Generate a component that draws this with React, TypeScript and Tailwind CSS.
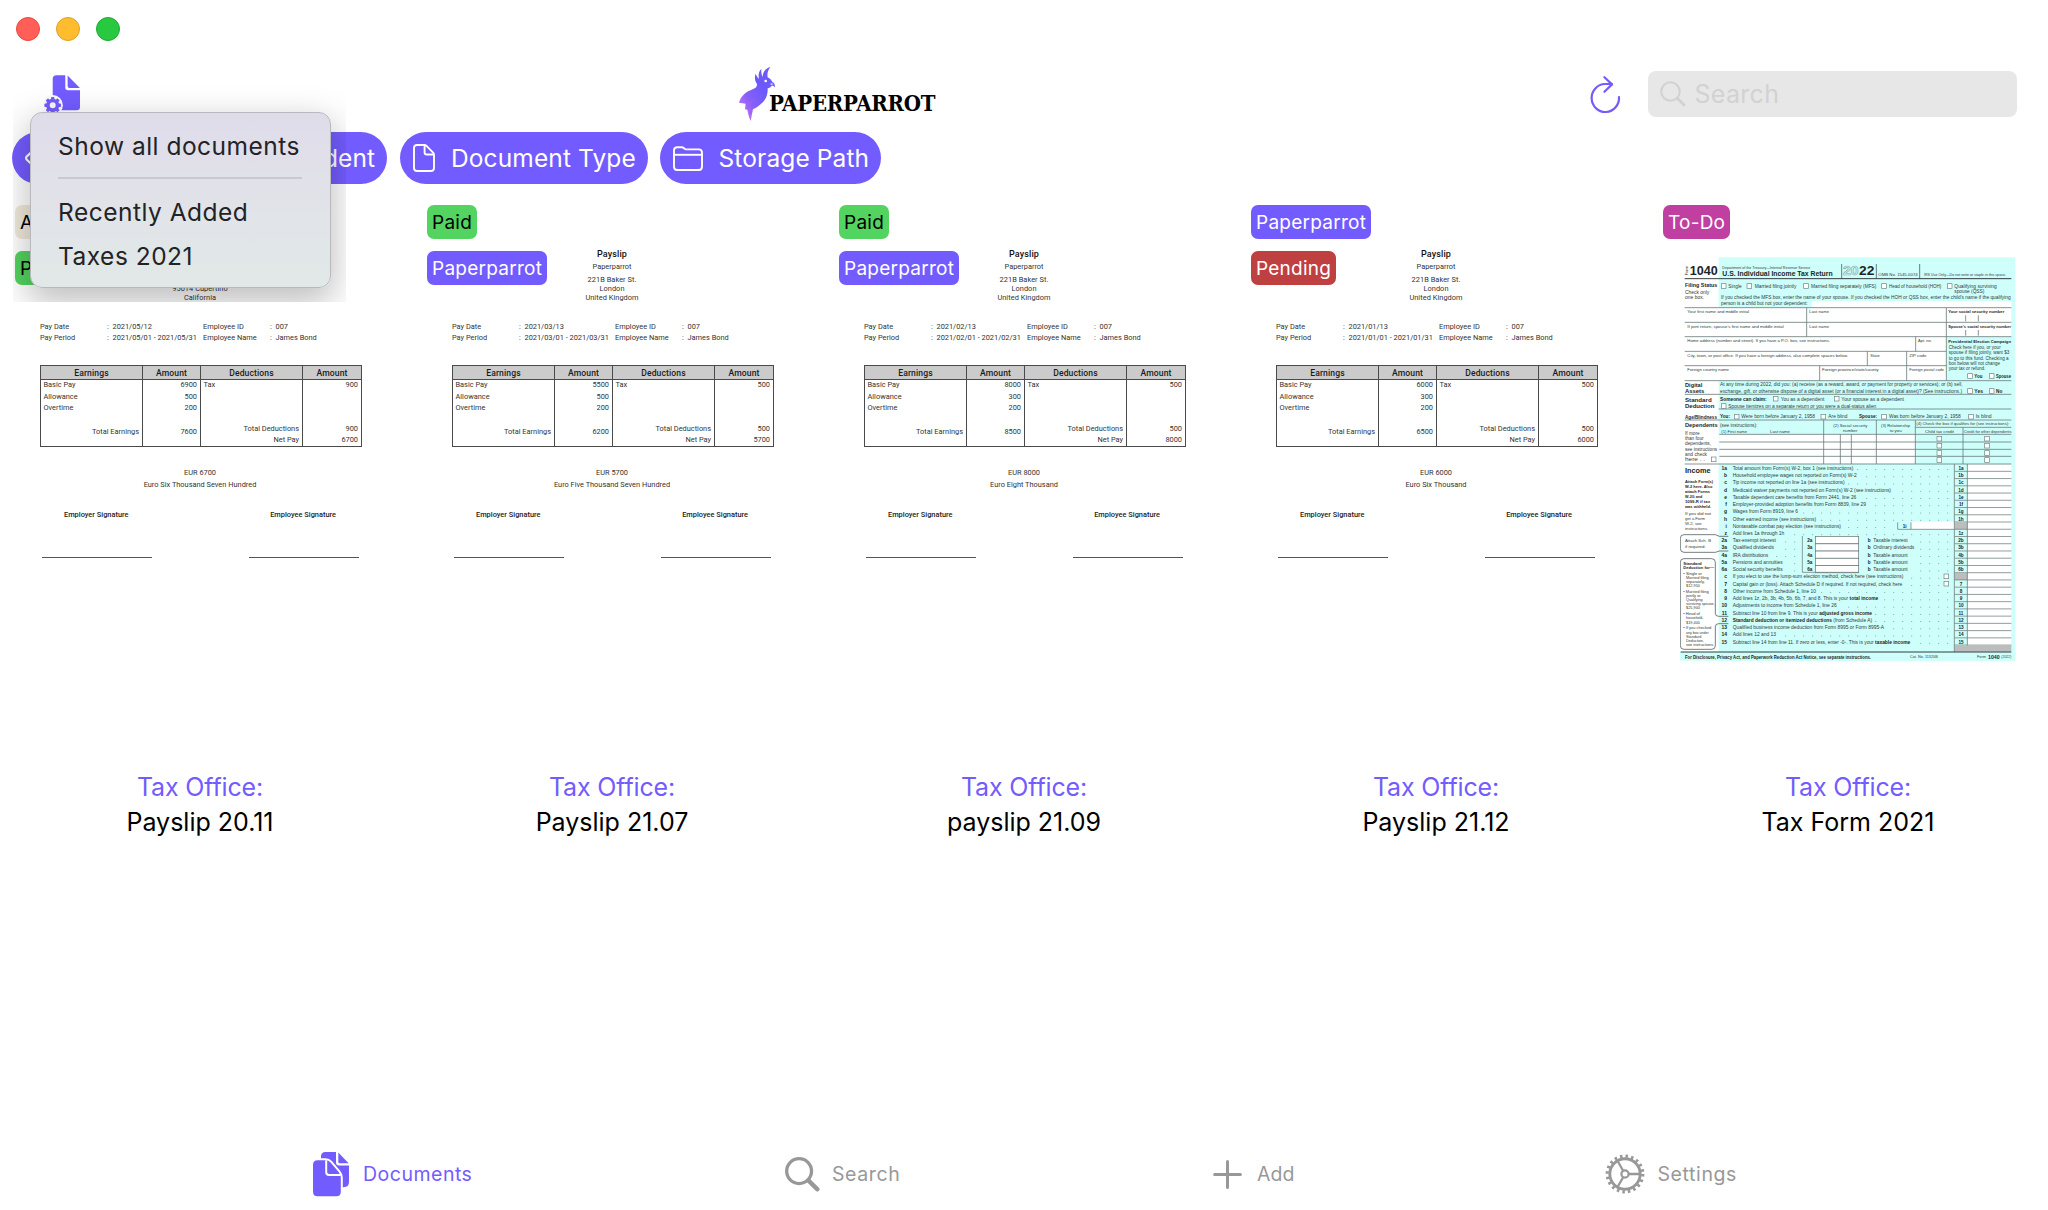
import React from "react";

const PURPLE = "#735cff";

/* ---------- icons ---------- */

function SavedViewsIcon() {
  const teeth = [0, 45, 90, 135, 180, 225, 270, 315];
  return (
    <svg width="38" height="42" viewBox="44 74 38 42" fill={PURPLE}>
      <path d="M56.5 75.3H65.3V87.5Q65.3 90.3 68 90.3H80V107Q80 110.3 76.7 110.3H56Q52.7 110.3 52.7 107V79Q52.7 75.3 56.5 75.3Z" />
      <path d="M67.6 75.6L79.9 88H69.5Q67.6 88 67.6 86Z" />
      <circle cx="52.7" cy="105.3" r="10.2" fill="#fafafa" />
      <circle cx="52.7" cy="105.3" r="4.8" fill="none" stroke={PURPLE} strokeWidth="3.6" />
      {teeth.map((a) => (
        <rect key={a} x="51" y="97" width="3.4" height="3.4" rx="0.8" transform={`rotate(${a} 52.7 105.3)`} />
      ))}
    </svg>
  );
}

function ParrotMark() {
  return (
    <svg width="60" height="66" viewBox="0 0 180 198" className="shrink-0">
      <defs>
        <linearGradient id="parrot" x1="0.1" y1="0.8" x2="0.6" y2="0.35">
          <stop offset="0" stopColor="#c06cf7" />
          <stop offset="0.4" stopColor="#8560f9" />
          <stop offset="1" stopColor="#6d59fb" />
        </linearGradient>
      </defs>
      <path
        fill="url(#parrot)"
        d="M81 72C74 62 73 52 77 41C80 48 83 53 87 56C84 44 87 33 94 26C93 37 95 45 98 51C98 37 106 25 121 21C113 31 111 42 113 52C120 55 125 61 127 66C133 68 136 75 134 82C130 77 127 77 124 78C122 82 118 84 113 85C114 102 108 120 95 130C86 139 77 144 69 148C66 160 64 172 62 183C57 172 54 160 52 149L45 148L47 131L27 128C31 111 44 98 58 92C70 87 82 84 81 72Z"
      />
      <path d="M47 131C58 128 66 122 72 112C70 126 62 140 52 149" fill="#9a63f6" opacity="0.6" />
      <circle cx="107" cy="63" r="4" fill="#fff" />
      <path d="M122 70Q127 69 131 73Q126 74 122 75Z" fill="#fff" opacity="0.8" />
    </svg>
  );
}

function RefreshIcon() {
  return (
    <svg width="32" height="40" viewBox="1589 75 32 40" fill="none" stroke={PURPLE} strokeWidth="2.2" strokeLinecap="round" strokeLinejoin="round">
      <path d="M1619 97A13.7 14 0 1 1 1605 84H1612" />
      <path d="M1604.4 77.2L1612 84.4L1604.4 91.8" />
    </svg>
  );
}

function MagnifierIcon({ className, thick }: { className: string; thick: number }) {
  return (
    <svg className={className} viewBox="0 0 36 36" fill="none" stroke="currentColor" strokeLinecap="round">
      <circle cx="14.5" cy="14.5" r="12.8" strokeWidth={thick} />
      <path d="M24 24L33.2 33.2" strokeWidth={thick * 1.35} />
    </svg>
  );
}

function TagIcon() {
  return (
    <svg width="30" height="28" viewBox="0 0 30 28" fill="none" stroke="#fff" strokeWidth="2.2" strokeLinejoin="round">
      <path d="M1.6 15.5Q.6 14 1.6 12.6L12 3H24Q27 3 27 6V16L16 26Q14 27 12.6 26Z" />
      <circle cx="21" cy="9" r="1.5" />
    </svg>
  );
}

function PersonIcon() {
  return (
    <svg width="28" height="28" viewBox="0 0 28 28" fill="none" stroke="#fff" strokeWidth="2">
      <circle cx="14" cy="9" r="6" />
      <path d="M3 26Q3 17 14 17T25 26Z" />
    </svg>
  );
}

function FileIcon() {
  return (
    <svg width="22" height="28" viewBox="0 0 22 28" fill="none" stroke="#fff" strokeWidth="1.9" strokeLinejoin="round">
      <path d="M4 1H11.4Q12.6 1 13.5 1.9L20.1 8.7Q21 9.6 21 10.8V24Q21 27 18 27H4Q1 27 1 24V4Q1 1 4 1Z" />
      <path d="M11.6 1.3V8.4Q11.6 10.5 13.7 10.5H20.6" />
    </svg>
  );
}

function FolderIcon() {
  return (
    <svg width="30" height="25" viewBox="0 0 30 25" fill="none" stroke="#fff" strokeWidth="1.9" strokeLinejoin="round">
      <path d="M4.3 1.2H8.6Q9.8 1.2 10.8 2L11.6 2.7Q12.5 3.4 13.7 3.4H25.7Q29 3.4 29 6.7V20.7Q29 24 25.7 24H4.3Q1 24 1 20.7V4.5Q1 1.2 4.3 1.2Z" />
      <path d="M1.2 8.8H28.8" />
    </svg>
  );
}

function DocumentsIcon() {
  return (
    <svg width="37" height="45" viewBox="0 0 37 45" fill={PURPLE}>
      <path d="M12.5 0H23V10.2Q23 13.4 26 13.4H36V30Q36 35.2 30.5 35.2H20V12H8V4.5Q8 0 12.5 0Z" />
      <path d="M25.3 .6L35.6 11.2H26.6Q25.3 11.2 25.3 10Z" />
      <path
        d="M4.5 8.3H12.6Q15.6 8.3 17.6 10.6L25.6 20Q27.8 22.6 27.8 25.6V39.7Q27.8 44.2 23.3 44.2H4.5Q0 44.2 0 39.7V12.8Q0 8.3 4.5 8.3Z"
        stroke="#fff"
        strokeWidth="4"
        paintOrder="stroke"
      />
      <path d="M13.2 8.3V20Q13.2 22.9 16 22.9H27.8" fill="none" stroke="#fff" strokeWidth="2" />
    </svg>
  );
}

function PlusIcon() {
  return (
    <svg width="29" height="29" viewBox="0 0 29 29" stroke="#989898" strokeWidth="3" strokeLinecap="round">
      <path d="M14.5 1.6V27.4M1.6 14.5H27.4" />
    </svg>
  );
}

function GearIcon() {
  return (
    <svg width="40" height="40" viewBox="-20 -20 40 40" fill="none" stroke="#989898">
      <circle r="15.2" strokeWidth="2.9" />
      <circle r="17.8" strokeWidth="3.2" strokeDasharray="2.5 3.09" />
      <circle r="3.6" strokeWidth="2.2" />
      <path d="M4 0H15M-2 -3.5L-7.4 -13M-2 3.5L-7.4 13" strokeWidth="2.3" />
    </svg>
  );
}

/* ---------- payslip preview ---------- */

type Slip = {
  address: string[];
  date: string;
  period: string;
  basic: string;
  allowance: string;
  total: string;
  tax: string;
  net: string;
  words: string;
};

function Column({ title, width, align, rows, total, net }: { title: string; width: string; align: string; rows: string[]; total: string; net?: string }) {
  return (
    <div className={`${width} flex flex-col border-r border-[#4a4a4a]`}>
      <div className="h-[14px] border-b border-[#4a4a4a] bg-[#cbcbcb] text-center text-[8.6px] leading-[14px] font-medium tracking-[0.1px] text-[#1c1c1c]">{title}</div>
      <div className={`-mt-px flex h-[48px] flex-col pr-[3px] pl-[2.5px] leading-[11.7px] ${align}`}>
        {rows.map((r) => (
          <span key={r}>{r}</span>
        ))}
      </div>
      <div className="px-[3px] text-right leading-[10.8px]">
        <div>{total}</div>
        <div>{net}</div>
      </div>
    </div>
  );
}

function Info({ label, value }: { label: string; value: string }) {
  return (
    <div className="flex h-[11.4px] whitespace-nowrap">
      <span className="w-[67px]">{label}</span>
      <span className="w-[5.5px]">:</span>
      <span>{value}</span>
    </div>
  );
}

function Payslip({ slip }: { slip: Slip }) {
  return (
    <div className="mx-auto w-[322px] pt-[63px] font-[Roboto,sans-serif] text-[7.4px] leading-[11.4px] text-[#333]">
      <div className="flex h-[73px] flex-col items-center whitespace-nowrap">
        <div className="h-[14px] pt-px text-[9px] leading-[10px] font-medium tracking-[0.1px] text-[#111]">Payslip</div>
        <div className="h-[13px] leading-[9px]">Paperparrot</div>
        {slip.address.map((l) => (
          <div key={l} className="leading-[9px] tracking-[0.05px]">{l}</div>
        ))}
      </div>
      <div className="flex h-[44px] pl-px">
        <div className="w-[163px]">
          <Info label="Pay Date" value={slip.date} />
          <Info label="Pay Period" value={slip.period} />
        </div>
        <div>
          <Info label="Employee ID" value="007" />
          <Info label="Employee Name" value="James Bond" />
        </div>
      </div>
      <div className="ml-px flex h-[82px] w-[322px] border-y border-l border-[#4a4a4a]">
        <Column title="Earnings" width="w-[102px]" align="" rows={["Basic Pay", "Allowance", "Overtime"]} total="Total Earnings" />
        <Column title="Amount" width="w-[58px]" align="text-right" rows={[slip.basic, slip.allowance, "200"]} total={slip.total} />
        <Column title="Deductions" width="w-[102px]" align="" rows={["Tax"]} total="Total Deductions" net="Net Pay" />
        <Column title="Amount" width="w-[59px]" align="text-right" rows={[slip.tax]} total={slip.tax} net={slip.net} />
      </div>
      <div className="pt-[20px] text-center leading-[11.7px]">
        <div>EUR {slip.net}</div>
        <div>{slip.words}</div>
      </div>
      <div className="mt-[19px] flex justify-between px-[25px] font-medium text-[#222]">
        <span>Employer Signature</span>
        <span>Employee Signature</span>
      </div>
      <div className="mt-[36px] flex justify-between pr-[2px] pl-[3px]">
        <div className="h-px w-[110px] bg-[#555]" />
        <div className="h-px w-[110px] bg-[#555]" />
      </div>
    </div>
  );
}

/* ---------- 1040 form preview ---------- */

type TxtProps = { x: number; y: number; w?: number; s?: number; b?: boolean; c?: string; children: string };

function Txt({ x, y, w, s = 15, b, c = "#2e3a3a", children }: TxtProps) {
  return (
    <text x={x} y={y} fontSize={s} fontWeight={b ? 700 : 400} fill={b ? "#1d2626" : c} textLength={w} lengthAdjust="spacingAndGlyphs">
      {children}
    </text>
  );
}

function Box({ x, y }: { x: number; y: number }) {
  return <rect x={x} y={y} width="14" height="14" fill="#fff" stroke="#6f7f7f" strokeWidth="2" />;
}

// [line number, description, text width, right-hand number]
const incomeRows: [string, string, number, string][] = [
  ["1a", "Total amount from Form(s) W-2, box 1 (see instructions)", 362, "1a"],
  ["b", "Household employee wages not reported on Form(s) W-2", 372, "1b"],
  ["c", "Tip income not reported on line 1a (see instructions)", 336, "1c"],
  ["d", "Medicaid waiver payments not reported on Form(s) W-2 (see instructions)", 475, "1d"],
  ["e", "Taxable dependent care benefits from Form 2441, line 26", 371, "1e"],
  ["f", "Employer-provided adoption benefits from Form 8839, line 29", 400, "1f"],
  ["g", "Wages from Form 8919, line 6", 196, "1g"],
  ["h", "Other earned income (see instructions)", 250, "1h"],
  ["i", "Nontaxable combat pay election (see instructions)", 325, ""],
  ["z", "Add lines 1a through 1h", 155, "1z"],
  ["2a", "Tax-exempt interest", 130, "2b"],
  ["3a", "Qualified dividends", 124, "3b"],
  ["4a", "IRA distributions", 107, "4b"],
  ["5a", "Pensions and annuities", 150, "5b"],
  ["6a", "Social security benefits", 150, "6b"],
  ["c", "If you elect to use the lump-sum election method, check here (see instructions)", 512, ""],
  ["7", "Capital gain or (loss). Attach Schedule D if required. If not required, check here", 509, "7"],
  ["8", "Other income from Schedule 1, line 10", 250, "8"],
  ["9", "Add lines 1z, 2b, 3b, 4b, 5b, 6b, 7, and 8. This is your total income", 437, "9"],
  ["10", "Adjustments to income from Schedule 1, line 26", 312, "10"],
  ["11", "Subtract line 10 from line 9. This is your adjusted gross income", 418, "11"],
  ["12", "Standard deduction or itemized deductions (from Schedule A)", 418, "12"],
  ["13", "Qualified business income deduction from Form 8995 or Form 8995-A", 454, "13"],
  ["14", "Add lines 12 and 13", 130, "14"],
  ["15", "Subtract line 14 from line 11. If zero or less, enter -0-. This is your taxable income", 533, "15"],
];
const boldTail: Record<string, string> = { "9": "total income", "11": "adjusted gross income", "15": "taxable income" };
const middleLabels = ["Taxable interest", "Ordinary dividends", "Taxable amount", "Taxable amount", "Taxable amount"];
const middleWidths = [103, 123, 103, 103, 103];
const CY = "#cefffa";
const LN = "#6b7878";

function IncomeDescription({ id, text }: { id: string; text: string }) {
  const tail = boldTail[id];
  if (id === "12")
    return (
      <>
        <tspan fontWeight="700" fill="#1d2626">Standard deduction or itemized deductions</tspan> (from Schedule A)
      </>
    );
  if (!tail) return <>{text}</>;
  return (
    <>
      {text.slice(0, text.length - tail.length)}
      <tspan fontWeight="700" fill="#1d2626">{tail}</tspan>
    </>
  );
}

function TaxForm() {
  const dots = Array.from({ length: 26 }, (_, i) => 862 - i * 27);
  const attach = ["Attach Form(s)", "W-2 here. Also", "attach Forms", "W-2G and", "1099-R if tax", "was withheld."];
  const attachW = [84, 82, 75, 52, 75, 78];
  const noGet: [string, number][] = [["If you did not", 78], ["get a Form", 60], ["W-2, see", 50], ["instructions.", 70]];
  const depLeft: [string, number][] = [["If more", 44], ["than four", 56], ["dependents,", 78], ["see instructions", 96], ["and check", 66], ["here  .  .", 60]];
  const std: [string, number, number][] = [
    ["• Single or", 1155, 56], ["Married filing", 1167, 68], ["separately,", 1179, 56], ["$12,950", 1191, 42],
    ["• Married filing", 1208, 76], ["jointly or", 1220, 44], ["Qualifying", 1233, 50], ["surviving spouse,", 1246, 86], ["$25,900", 1258, 42],
    ["• Head of", 1276, 50], ["household,", 1288, 52], ["$19,400", 1301, 42],
    ["• If you checked", 1318, 84], ["any box under", 1331, 68], ["Standard", 1343, 46], ["Deduction,", 1356, 54], ["see instructions.", 1369, 84],
  ];
  return (
    <svg width="336" height="404" viewBox="60 201 1008 1212" fontFamily="'Liberation Sans', Arial, sans-serif">
      <rect x="176" y="202" width="890" height="1210" fill={CY} />
      <rect x="60" y="1386" width="1006" height="26" fill={CY} />
      <g fill="#fff">
        <rect x="455" y="333" width="599" height="20" />
        <rect x="74" y="353" width="785" height="219" />
        <rect x="859" y="353" width="195" height="87" />
        <rect x="178" y="733" width="588" height="88" />
        <rect x="922" y="823" width="132" height="542" />
      </g>

      <text transform="translate(85 256) rotate(-90)" fontSize="13" textLength="28" fill="#333">Form</text>
      <Txt x={89} y={255} w={84} s={40} b>1040</Txt>
      <Txt x={187} y={236} w={264} s={11}>Department of the Treasury—Internal Revenue Service</Txt>
      <Txt x={187} y={259} w={331} s={22} b>U.S. Individual Income Tax Return</Txt>
      <text x="549" y="255" fontSize="36" fontWeight="700" textLength="47" lengthAdjust="spacingAndGlyphs" fill="none" stroke="#8fa6a5" strokeWidth="1.8">20</text>
      <Txt x={597} y={255} w={46} s={36} b>22</Txt>
      <Txt x={655} y={259} w={118} s={13}>OMB No. 1545-0074</Txt>
      <Txt x={792} y={259} w={246} s={11}>IRS Use Only—Do not write or staple in this space.</Txt>
      <path d="M74 266H1054" stroke="#333d3d" strokeWidth="3" />
      <path d="M545 222V266M649 222V266M779 222V266" stroke="#333d3d" strokeWidth="2" />

      <Txt x={75} y={292} w={97} s={17} b>Filing Status</Txt>
      <Txt x={75} y={312} w={73}>Check only</Txt>
      <Txt x={75} y={328} w={57}>one box.</Txt>
      <Box x={184} y={281} /><Txt x={205} y={293} w={40}>Single</Txt>
      <Box x={261} y={281} /><Txt x={284} y={293} w={125}>Married filing jointly</Txt>
      <Box x={431} y={281} /><Txt x={453} y={293} w={196}>Married filing separately (MFS)</Txt>
      <Box x={665} y={281} /><Txt x={687} y={293} w={157}>Head of household (HOH)</Txt>
      <Box x={862} y={281} /><Txt x={883} y={293} w={127}>Qualifying surviving</Txt>
      <Txt x={883} y={308} w={90}>spouse (QSS)</Txt>
      <Txt x={183} y={327} w={869}>If you checked the MFS box, enter the name of your spouse. If you checked the HOH or QSS box, enter the child’s name if the qualifying</Txt>
      <Txt x={183} y={346} w={260}>person is a child but not your dependent:</Txt>

      <path d="M74 353H1054M74 397H1054M74 440H1054M74 484H859M74 527H859M74 572H1054M74 613H1054M176 657H1054M74 690H1054" stroke={LN} strokeWidth="2.4" />
      <path d="M440 353V440M859 353V572M767 440V484M622 484V527M740 484V572M479 527V572M917 376V394M955 376V394M917 420V437M955 420V437" stroke={LN} strokeWidth="2.4" />
      <Txt x={82} y={369} w={185} s={13}>Your first name and middle initial</Txt>
      <Txt x={448} y={369} w={59} s={13}>Last name</Txt>
      <Txt x={865} y={369} w={168} s={13} b>Your social security number</Txt>
      <Txt x={82} y={413} w={289} s={13}>If joint return, spouse’s first name and middle initial</Txt>
      <Txt x={448} y={413} w={59} s={13}>Last name</Txt>
      <Txt x={865} y={413} w={188} s={13} b>Spouse’s social security number</Txt>
      <Txt x={82} y={456} w={428} s={13}>Home address (number and street). If you have a P.O. box, see instructions.</Txt>
      <Txt x={774} y={456} w={42} s={13}>Apt. no.</Txt>
      <Txt x={82} y={500} w={482} s={13}>City, town, or post office. If you have a foreign address, also complete spaces below.</Txt>
      <Txt x={631} y={500} w={28} s={13}>State</Txt>
      <Txt x={748} y={500} w={51} s={13}>ZIP code</Txt>
      <Txt x={82} y={543} w={125} s={13}>Foreign country name</Txt>
      <Txt x={486} y={543} w={170} s={13}>Foreign province/state/county</Txt>
      <Txt x={748} y={543} w={104} s={13}>Foreign postal code</Txt>
      <Txt x={865} y={458} w={188} s={13} b>Presidential Election Campaign</Txt>
      <Txt x={866} y={476} w={156} s={14}>Check here if you, or your</Txt>
      <Txt x={866} y={493} w={182} s={14}>spouse if filing jointly, want $3</Txt>
      <Txt x={866} y={509} w={180} s={14}>to go to this fund. Checking a</Txt>
      <Txt x={866} y={525} w={154} s={14}>box below will not change</Txt>
      <Txt x={866} y={541} w={110} s={14}>your tax or refund.</Txt>
      <Box x={923} y={551} /><Txt x={943} y={563} w={24} s={14} b>You</Txt>
      <Box x={988} y={551} /><Txt x={1008} y={563} w={45} s={14} b>Spouse</Txt>

      <Txt x={75} y={591} w={52} s={18} b>Digital</Txt>
      <Txt x={75} y={610} w={58} s={18} b>Assets</Txt>
      <Txt x={180} y={589} w={728}>At any time during 2022, did you: (a) receive (as a reward, award, or payment for property or services); or (b) sell,</Txt>
      <Txt x={180} y={608} w={726}>exchange, gift, or otherwise dispose of a digital asset (or a financial interest in a digital asset)? (See instructions.)</Txt>
      <Box x={923} y={596} /><Txt x={943} y={608} w={26} s={15} b>Yes</Txt>
      <Box x={988} y={596} /><Txt x={1008} y={608} w={19} s={15} b>No</Txt>
      <Txt x={75} y={635} w={80} s={18} b>Standard</Txt>
      <Txt x={75} y={654} w={88} s={18} b>Deduction</Txt>
      <Txt x={180} y={632} w={140} b>Someone can claim:</Txt>
      <Box x={340} y={619} /><Txt x={362} y={632} w={131}>You as a dependent</Txt>
      <Box x={523} y={619} /><Txt x={544} y={632} w={188}>Your spouse as a dependent</Txt>
      <Box x={184} y={641} /><Txt x={205} y={653} w={444}>Spouse itemizes on a separate return or you were a dual-status alien</Txt>
      <Txt x={75} y={686} w={96} s={15} b>Age/Blindness</Txt>
      <Txt x={180} y={685} w={30} b>You:</Txt>
      <Box x={223} y={673} /><Txt x={244} y={685} w={221}>Were born before January 2, 1958</Txt>
      <Box x={483} y={673} /><Txt x={505} y={685} w={57}>Are blind</Txt>
      <Txt x={597} y={685} w={54} b>Spouse:</Txt>
      <Box x={665} y={673} /><Txt x={687} y={685} w={215}>Was born before January 2, 1958</Txt>
      <Box x={926} y={673} /><Txt x={947} y={685} w={48}>Is blind</Txt>

      <Txt x={75} y={711} w={98} s={17} b>Dependents</Txt>
      {depLeft.map(([t, w], i) => (
        <Txt key={t} x={75} y={734 + i * 16} w={w} s={14}>{t}</Txt>
      ))}
      <Box x={154} y={801} />
      <Txt x={180} y={711} w={112} s={14}>(see instructions):</Txt>
      <Txt x={184} y={728} w={77} s={13}>(1) First name</Txt>
      <Txt x={330} y={728} w={60} s={13}>Last name</Txt>
      <Txt x={520} y={710} w={102} s={13}>(2) Social security</Txt>
      <Txt x={549} y={725} w={43} s={13}>number</Txt>
      <Txt x={663} y={710} w={87} s={13}>(3) Relationship</Txt>
      <Txt x={689} y={725} w={36} s={13}>to you</Txt>
      <Txt x={769} y={706} w={279} s={13}>(4) Check the box if qualifies for (see instructions):</Txt>
      <Txt x={795} y={728} w={87} s={13}>Child tax credit</Txt>
      <Txt x={912} y={728} w={142} s={12}>Credit for other dependents</Txt>
      <path d="M178 733H1054M178 756H1054M178 778H1054M178 799H1054M74 822H1054M766 712H1054M491 690V822M541 733V822M574 733V822M649 690V822M766 690V822M909 712V822" stroke={LN} strokeWidth="2.4" />
      {[739, 760, 782, 803].map((y) => (
        <g key={y}>
          <Box x={831} y={y} />
          <Box x={974} y={y} />
        </g>
      ))}

      <Txt x={75} y={848} w={77} s={21} b>Income</Txt>
      {attach.map((t, i) => (
        <Txt key={t} x={75} y={878 + i * 15.2} w={attachW[i]} s={13} b>{t}</Txt>
      ))}
      {noGet.map(([t, w], i) => (
        <Txt key={t} x={75} y={976 + i * 15} w={w} s={13}>{t}</Txt>
      ))}
      <path d="M205 1039H178L166 1034H72Q61 1034 61 1045V1075Q61 1087 72 1087H166L178 1083H205" fill="none" stroke="#444f4f" strokeWidth="2.2" />
      <Txt x={75} y={1057} w={78} s={13}>Attach Sch. B</Txt>
      <Txt x={75} y={1074} w={62} s={13}>if required.</Txt>

      {incomeRows.map(([n, text, w, right], i) => {
        const y = 839.5 + i * 21.72;
        const middle = i >= 10 && i <= 14;
        return (
          <g key={i}>
            <text x={201} y={y} fontSize="15" fontWeight="700" fill="#1d2626" textAnchor="end">{n}</text>
            <text x={218} y={y} fontSize="15" fill="#2e3a3a" textLength={w} lengthAdjust="spacingAndGlyphs">
              <IncomeDescription id={n} text={text} />
            </text>
            {dots
              .filter((x) => (middle ? (x > 218 + w + 8 && x < 415) || x > 770 : i === 8 ? x > 555 && x < 700 : i === 15 || i === 16 ? x > 740 && x < 845 : x > 218 + w + 8))
              .map((x) => (
                <rect key={x} x={x} y={y - 2} width="2.4" height="2.4" fill="#5d7a78" />
              ))}
            {middle && (
              <>
                <text x={457} y={y} fontSize="14" fontWeight="700" textAnchor="end" fill="#1d2626">{n}</text>
                <rect x="466" y={y - 17} width="130" height="21.7" fill="#fff" stroke={LN} strokeWidth="2.2" />
                <text x="623" y={y} fontSize="14" fontWeight="700" fill="#1d2626">b</text>
                <text x="640" y={y} fontSize="15" fill="#2e3a3a" textLength={middleWidths[i - 10]} lengthAdjust="spacingAndGlyphs">{middleLabels[i - 10]}</text>
              </>
            )}
            {right ? (
              <text x="903" y={y} fontSize="14" fontWeight="700" fill="#1d2626" textAnchor="middle">{right}</text>
            ) : (
              <rect x="884" y={y - 17} width="38" height="21.7" fill="#bdbdbd" />
            )}
            <path d={`M884 ${y + 4.5}H1054`} stroke={LN} strokeWidth="2.2" />
          </g>
        );
      })}
      <rect x="753" y="995" width="130" height="22" fill="#fff" />
      <path d="M713 997V1018H883M753 997V1018M427 1038V1147H596" fill="none" stroke={LN} strokeWidth="2.2" />
      <Txt x={728} y={1013} s={14} b>1i</Txt>
      <Box x={852} y={1152} />
      <Box x={852} y={1174} />
      <rect x="884" y="1366" width="170" height="19" fill="#bdbdbd" />
      <path d="M883 822V1386M922 822V1366" stroke={LN} strokeWidth="2.4" />

      <path d="M205 1279H176Q166 1279 166 1270V1117Q166 1106 155 1106H72Q61 1106 61 1117V1367Q61 1378 72 1378H155Q166 1378 166 1367V1310Q166 1301 176 1301H205" fill="none" stroke="#444f4f" strokeWidth="2.2" />
      <Txt x={70} y={1124} w={55} s={13} b>Standard</Txt>
      <Txt x={70} y={1137} w={92} s={13} b>Deduction for—</Txt>
      {std.map(([t, y, w]) => (
        <Txt key={t + y} x={t.startsWith("•") ? 70 : 78} y={y} w={w} s={12}>{t}</Txt>
      ))}

      <path d="M62 1386H1054" stroke="#333d3d" strokeWidth="3" />
      <Txt x={75} y={1406} w={558} s={14} b>For Disclosure, Privacy Act, and Paperwork Reduction Act Notice, see separate instructions.</Txt>
      <Txt x={750} y={1405} w={83} s={11}>Cat. No. 11320B</Txt>
      <Txt x={951} y={1405} w={27} s={11}>Form</Txt>
      <Txt x={984} y={1406} w={35} s={17} b>1040</Txt>
      <Txt x={1024} y={1405} w={30} s={11}>(2022)</Txt>
    </svg>
  );
}

/* ---------- documents ---------- */

type Tag = { label: string; color: string };

const paid: Tag = { label: "Paid", color: "bg-[#53d35f] text-black" };
const paperparrot: Tag = { label: "Paperparrot", color: "bg-[#735cff] text-white" };

const uk = ["221B Baker St.", "London", "United Kingdom"];

const documents: { title: string; tags: Tag[]; slip?: Slip }[] = [
  {
    title: "Payslip 20.11",
    tags: [{ label: "Apple", color: "bg-[#efe9da] text-black" }, paid],
    slip: { address: ["One Apple Park Way", "95014 Cupertino", "California"], date: "2021/05/12", period: "2021/05/01 - 2021/05/31", basic: "6900", allowance: "500", total: "7600", tax: "900", net: "6700", words: "Euro Six Thousand Seven Hundred" },
  },
  {
    title: "Payslip 21.07",
    tags: [paid, paperparrot],
    slip: { address: uk, date: "2021/03/13", period: "2021/03/01 - 2021/03/31", basic: "5500", allowance: "500", total: "6200", tax: "500", net: "5700", words: "Euro Five Thousand Seven Hundred" },
  },
  {
    title: "payslip 21.09",
    tags: [paid, paperparrot],
    slip: { address: uk, date: "2021/02/13", period: "2021/02/01 - 2021/02/31", basic: "8000", allowance: "300", total: "8500", tax: "500", net: "8000", words: "Euro Eight Thousand" },
  },
  {
    title: "Payslip 21.12",
    tags: [paperparrot, { label: "Pending", color: "bg-[#bf4040] text-white" }],
    slip: { address: uk, date: "2021/01/13", period: "2021/01/01 - 2021/01/31", basic: "6000", allowance: "300", total: "6500", tax: "500", net: "6000", words: "Euro Six Thousand" },
  },
  { title: "Tax Form 2021", tags: [{ label: "To-Do", color: "bg-[#bf40a0] text-white" }] },
];

function DocumentCard({ title, tags, slip }: { title: string; tags: Tag[]; slip?: Slip }) {
  return (
    <div className="relative flex w-[400px] flex-col">
      <div className="h-[585px]">
        {slip ? (
          <Payslip slip={slip} />
        ) : (
          <div className="pt-[72px] pl-[32px]">
            <TaxForm />
          </div>
        )}
      </div>
      <div className="absolute top-[20px] left-[15px] flex flex-col items-start gap-[12px]">
        {tags.map((t) => (
          <span key={t.label} className={`h-[34px] rounded-[7px] px-[5px] pt-px text-[19px] leading-[33px] tracking-[0.25px] ${t.color}`}>
            {t.label}
          </span>
        ))}
      </div>
      <div className="text-center text-[25px] leading-[35px] tracking-[-0.15px] text-[#735cff]">Tax Office:</div>
      <div className="text-center text-[25px] leading-[35px] text-black">{title}</div>
    </div>
  );
}

/* ---------- chrome ---------- */

function Pill({ width, icon, label, gap }: { width: string; icon: React.ReactNode; label: string; gap: string }) {
  return (
    <button className={`flex h-[52px] shrink-0 items-center rounded-full bg-[#735cff] pl-[13px] text-[24.5px] leading-[52px] tracking-[0.12px] whitespace-nowrap text-white ${width} ${gap}`}>
      {icon}
      {label}
    </button>
  );
}

function Menu() {
  return (
    <div className="pointer-events-none absolute top-[70px] left-[13px] h-[232px] w-[333px] overflow-hidden">
      <div className="mt-[42px] ml-[16.5px] h-[176px] w-[301px] rounded-[12px] border border-[#b9b9bd] bg-linear-to-b from-[#dfdcea] via-[#e1e2e9] via-45% to-[#e1e9e7] px-[27.5px] text-[24.5px] text-[#232325] shadow-[0_12px_34px_3px_rgba(0,0,0,0.25)]">
        <div className="pt-[13px] leading-[40px] tracking-[0.5px] whitespace-nowrap">Show all documents</div>
        <div className="mt-[11px] h-[2px] w-[244px] bg-[#c9c9d0]" />
        <div className="pt-[11px] leading-[44px] tracking-[0.5px]">Recently Added</div>
        <div className="leading-[44px] tracking-[0.5px]">Taxes 2021</div>
      </div>
    </div>
  );
}

function Tab({ icon, label, active, className }: { icon: React.ReactNode; label: string; active?: boolean; className: string }) {
  return (
    <div className={`flex items-center text-[19.5px] ${active ? "text-[#735cff]" : "text-[#989898]"} ${className}`}>
      {icon}
      <span className="pt-[2px]">{label}</span>
    </div>
  );
}

export default function App() {
  return (
    <div className="relative flex h-[1210px] w-[2048px] flex-col overflow-hidden bg-white font-[Inter,sans-serif]">
      <div className="flex h-[58px] gap-[16px] pt-[17px] pl-[16px]">
        <span className="size-[24px] rounded-full border border-[#e8483f] bg-[#ff5f57]" />
        <span className="size-[24px] rounded-full border border-[#e0a126] bg-[#febc2e]" />
        <span className="size-[24px] rounded-full border border-[#1fa932] bg-[#28c840]" />
      </div>

      <header className="flex h-[74px] items-start pl-[44px]">
        <div className="w-[686px] pt-[16px]">
          <SavedViewsIcon />
        </div>
        <div className="flex w-[859px] pt-[2px]">
          <ParrotMark />
          <span className="mt-[30px] -ml-[21px] font-['DejaVu_Serif_Condensed','DejaVu_Serif',serif] text-[22px] leading-[26px] font-bold tracking-[-0.2px] text-black">PAPERPARROT</span>
        </div>
        <div className="w-[59px] pt-[17px]">
          <RefreshIcon />
        </div>
        <div className="mt-[13px] flex h-[46px] w-[369px] items-center rounded-[8px] bg-[#e7e7e7] pl-[12px] text-[25px] tracking-[0.3px] text-[#d2d2d2]">
          <MagnifierIcon className="mr-[8.5px] size-[26px]" thick={2.9} />
          <span className="pt-[2px]">Search</span>
        </div>
      </header>

      <nav className="flex h-[53px] gap-[12.5px] pl-[12px]">
        <Pill width="w-[130px]" icon={<TagIcon />} gap="gap-[14px]" label="Tags" />
        <Pill width="w-[232.5px]" icon={<PersonIcon />} gap="gap-[4px]" label="Correspondent" />
        <Pill width="w-[248px]" icon={<FileIcon />} gap="gap-[16.5px]" label="Document Type" />
        <Pill width="w-[221px]" icon={<FolderIcon />} gap="gap-[15.5px]" label="Storage Path" />
      </nav>

      <main className="flex gap-[12px]">
        {documents.map((d) => (
          <DocumentCard key={d.title} {...d} />
        ))}
      </main>

      <footer className="mt-auto flex h-[72px] items-center pl-[312.5px]">
        <Tab className="w-[472px] gap-[13.5px] tracking-[0.5px]" icon={<DocumentsIcon />} label="Documents" active />
        <Tab className="w-[428.5px] gap-[12.5px] tracking-[0.6px]" icon={<MagnifierIcon className="size-[35px]" thick={3.4} />} label="Search" />
        <Tab className="w-[391.5px] gap-[15px]" icon={<PlusIcon />} label="Add" />
        <Tab className="gap-[13px] tracking-[0.6px]" icon={<GearIcon />} label="Settings" />
      </footer>

      <Menu />
    </div>
  );
}
